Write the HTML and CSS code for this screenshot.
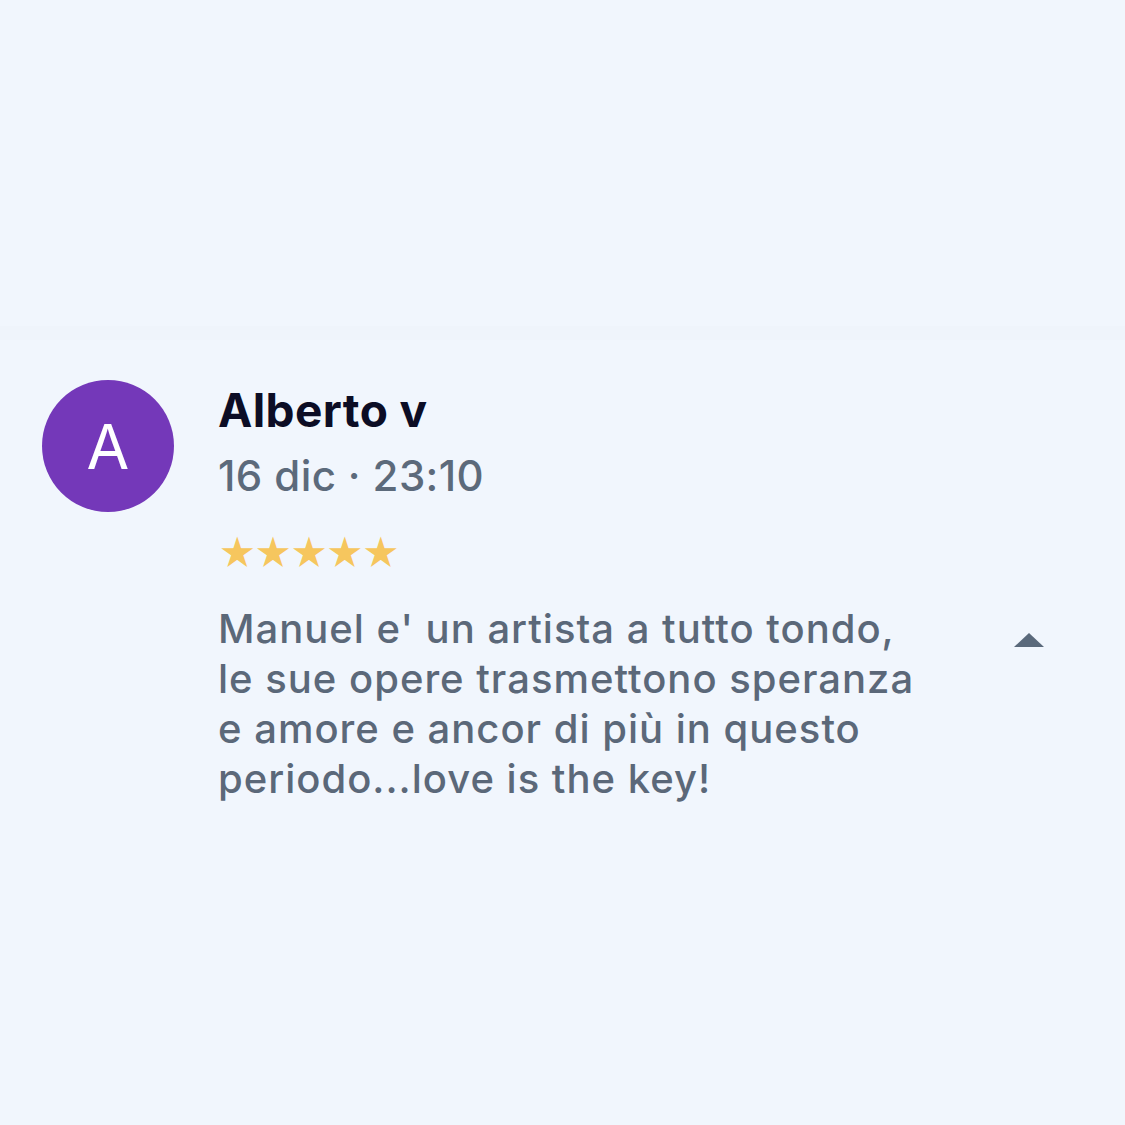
FILE: index.html
```html
<!doctype html>
<html>
    <head>
        <meta charset="utf-8">
        <meta name="viewport" content="width=device-width, initial-scale=1">
        <title>Recensione</title>
        <link rel="stylesheet" href="styles.css">
    </head>
    <body>
        <div class="divider"></div>
        <div class="review">
            <div class="avatar">A</div>
            <div class="content">
                <div class="name">Alberto v</div>
                <div class="date">16 dic · 23:10</div>
                <div class="stars">★★★★★</div>
                <div class="body">
                    <p class="text">Manuel e' un artista a tutto tondo, le sue opere trasmettono speranza e amore e ancor di più in questo periodo...love is the key!</p>
                    <div class="toggle"></div>
                </div>
            </div>
        </div>
    </body>
</html>
```

FILE: styles.css
```css
* {
    margin: 0;
    padding: 0;
    box-sizing: border-box;
}

body {
    background-color: #f1f6fd;
    font-family: Inter, "Noto Sans", sans-serif;
    height: 1125px;
}

.divider {
    height: 340px;
    border-bottom: 14px solid #eff4fb;
}

.review {
    display: flex;
    gap: 44px;
    padding: 40px 0 0 42px;
}

.avatar {
    width: 132px;
    height: 132px;
    border-radius: 50%;
    background-color: #7438b9;
    color: #fff;
    font-size: 62px;
    display: flex;
    justify-content: center;
    align-items: center;
    flex-shrink: 0;
}

.content {
    width: 826px;
}

.name {
    font-size: 46px;
    font-weight: 700;
    color: #0c0d25;
    line-height: 60px;
    letter-spacing: 0.4px;
}

.date {
    margin-top: 6px;
    font-size: 42px;
    font-weight: 500;
    color: #5c6a7b;
    line-height: 60px;
    letter-spacing: 0.4px;
}

.stars {
    margin-top: 26px;
    font-size: 37px;
    color: #f6c65e;
    line-height: 44px;
    letter-spacing: -2.8px;
}

.body {
    display: flex;
    justify-content: space-between;
    margin-top: 28px;
}

.text {
    width: 704px;
    font-size: 40px;
    font-weight: 500;
    line-height: 50px;
    color: #5b6879;
    letter-spacing: 1px;
}

.toggle {
    margin-top: 29px;
    width: 0;
    height: 0;
    border-left: 15px solid transparent;
    border-right: 15px solid transparent;
    border-bottom: 14px solid #5a697b;
}
```
